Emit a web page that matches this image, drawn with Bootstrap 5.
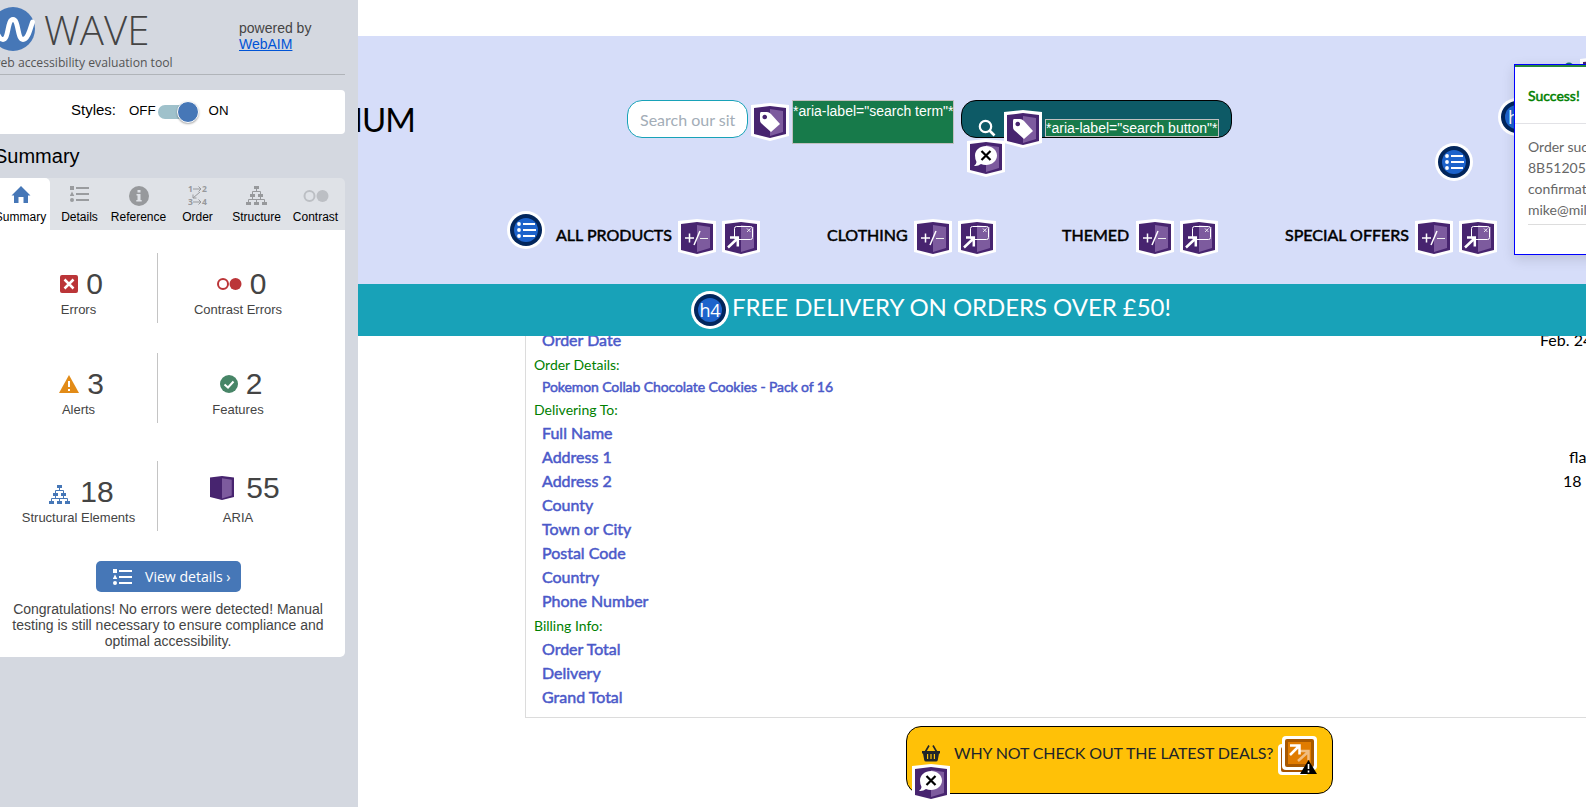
<!DOCTYPE html>
<html lang="en">
<head>
<meta charset="utf-8">
<title>WAVE report</title>
<link href="https://cdn.jsdelivr.net/npm/bootstrap@5.3.0/dist/css/bootstrap.min.css" rel="stylesheet">
<style>
body{font-family:Lato,sans-serif;font-size:16px;color:#000;width:1586px;height:807px;overflow:hidden;background:#fff}
svg{display:block;flex:none}
.wave-side{width:358px;height:807px;background:#d4d8e0;font-family:"Liberation Sans",sans-serif;color:#444;overflow:hidden;flex:none}
.wave-inner{width:354px;margin-left:-9px}
.wave-head{height:75px;border-bottom:1px solid #b0b4b9}
.logo-row{height:54px}
.logo-word{font:300 40.2px/44px "Open Sans",sans-serif;color:#444;height:44px;margin:8px 0 0 9px}
.tagline{font:12.2px/16px "Open Sans",sans-serif;white-space:nowrap;color:#555;padding-top:1px}
.powered{font-size:14px;line-height:16px;width:106px;padding-top:20px}
.powered a{color:#0054d6}
.styles-box{height:44px;margin-top:15px;border-radius:4px;background:#fff;color:#000}
.styles-box span{margin-top:-3px}
.sw-track{width:34px;height:14px;border-radius:7px;background:#9fc1cb;position:relative}
.sw-track i{position:absolute;left:19px;top:-4px;width:22px;height:22px;border-radius:50%;background:#4677b7;border:1px solid #fff;box-shadow:0 1px 2px #0005}
.side-title{font-size:20px;line-height:24px;color:#000;margin:10px 0 10px 3px}
.wave-tabs{height:52px;background:#dfe2e7;border-radius:5px 5px 0 0;overflow:hidden}
.wave-tab{width:59px;padding-top:6px;font-size:12px;line-height:16px;color:#000}
.wave-tab svg{margin-bottom:3px}
.wave-tab.on{background:#fff;border-radius:0 5px 0 0}
.panel{height:427px;background:#fff;border-radius:0 0 5px 5px;padding-top:23px}
.counts{width:320px;margin-left:9px}
.count-row{height:70px}
.count-row>div{width:160px;padding-top:14px}
.count-row>div:first-child{border-right:1px solid #c4c4c4;width:158px}
.num{font-size:30px;line-height:34px;height:34px;padding-left:6px}
.cap{font-size:13px;line-height:16px;margin-top:1px}
.vd{width:145px;height:31px;border-radius:5px;background:#4677b7;color:#fff;font:14.1px/20px "Open Sans",sans-serif;margin:30px 0 0 105px;padding-left:17px}
.congrats{font-size:14px;line-height:16px;margin-top:9px;padding:0 20px}
.site{width:1228px;overflow:hidden;position:relative}
.site-head{height:248px;background:#d6ddf9;margin-top:36px}
.brand{font-size:33px;line-height:40px;width:57px;height:40px;letter-spacing:-1px;margin-top:63px;flex:none;white-space:nowrap;padding-left:0}
.search{width:121px;height:38px;border:1px solid #18a2b8;border-radius:15px;background:#fff;color:#a3adb7;padding:7px 12px;white-space:nowrap;margin:64px 3px 0 212px;flex:none}
.aria-lab{background:#177a4a;border:1px solid #c0c0c0;color:#fff;font:14px/18px "Liberation Sans",sans-serif;white-space:nowrap;flex:none}
.sbtn{width:271px;height:38px;border:1px solid #000;border-radius:15px;background:#0d5a66;margin:64px 0 0 7px;flex:none;position:relative}
.over{position:absolute}
.fb{-webkit-text-stroke:.5px currentColor;white-space:nowrap}
.nav-line{padding:0 0 0 149px}
.nav-line .fb{line-height:24px;margin-top:12px;flex:none}
.promo{height:52px;background:#18a2b8;color:#fff;font-size:24px;line-height:29px;padding:7px 0 0 333px;letter-spacing:-.06px}
.order{margin-left:167px;border:1px solid #dcdcdc;border-width:0 0 1px 1px;height:382px;padding:0 0 8px 8px;overflow:hidden}
.order-in{margin-top:-8px}
.oh{font-size:14px;line-height:24px;color:#008000;position:relative;padding-top:1px;height:24px}
.orow{line-height:24px;padding-left:8px}
.orow .fb{color:#4b59c9}
.orow .sm{font-size:14px;line-height:21px;letter-spacing:-.09px}
.val{white-space:nowrap;overflow:hidden}
.deal{width:427px;height:68px;border:1px solid #000;border-radius:15px;background:#ffc107;color:#212529;margin:8px 0 0 548px;padding:9px 15px;position:relative}
.toastbox{left:1156px;top:64px;width:90px;height:191px;background:#fff;border:1px solid #00f;box-shadow:0 4px 12px #0002;overflow:hidden}
.toastbox .t-in{border-top:2px solid #28873c;padding-left:13px}
.t-h{height:57px;padding-top:18px;font-size:14px;line-height:21px;color:green;border-bottom:1px solid #e2e2e6;margin-left:-13px;padding-left:13px}
.t-b{font-size:14px;line-height:21px;color:#666;padding:12px 0 4px;border-bottom:1px solid #ddd;white-space:nowrap}
</style>
</head>
<body class="d-flex">
<svg width="0" height="0" class="position-absolute">
<symbol id="aria" viewBox="0 0 38 38"><path fill="#fff" d="M0 2 19 0l19 2v31l-19 5-19-5z"/><path fill="#47246f" d="M3 5l16-2 16 2v26l-16 4-16-4z"/><path fill="#7d5b9e" d="M19 6l13 2v21l-13 4z"/></symbol>
<symbol id="tag" viewBox="0 0 38 38"><use href="#aria"/><path fill="#fff" fill-rule="evenodd" d="M10 9h6q2 0 4 2l9 10-9 8-10-9q-1-1-1-3v-6q0-2 1-2zm3.700 2.700a2.300 2.300 0 1 0 .1 0z"/></symbol>
<symbol id="exp" viewBox="0 0 38 38"><use href="#aria"/><path stroke="#fff" stroke-width="1.500" fill="none" d="M7 19h9M11.500 14.500v9M16 26l6-14"/><path stroke="#eee" stroke-width="1" d="M22 19.500h8"/></symbol>
<symbol id="pop" viewBox="0 0 38 38"><use href="#aria"/><rect x="12.500" y="7.500" width="18" height="13" rx="2" fill="none" stroke="#fff"/><path stroke="#fff" stroke-width=".8" d="M25 9.500l3.500 3.500m0-3.500L25 13"/><path fill="none" stroke="#fff" stroke-width="2.500" d="M6 28.500L16 19M8 18.500h7.800v9"/></symbol>
<symbol id="say" viewBox="0 0 38 38"><use href="#aria"/><path fill="#fff" d="M19 7c6 0 11 4 11 9.500S25 26 19 26q-3 0-5-1-3 2.500-7 2 2.500-2 2.500-4Q8 20 8 16.500C8 11 13 7 19 7z"/><path stroke="#000" stroke-width="2.200" d="M14.500 12l9 9m0-9l-9 9"/></symbol>
<symbol id="disc" viewBox="0 0 38 38"><circle cx="19" cy="19" r="19" fill="#fff"/><circle cx="19" cy="19" r="16" fill="#02265c"/><circle cx="19" cy="19" r="12" fill="#1d63cb"/></symbol>
<symbol id="lst" viewBox="0 0 38 38"><use href="#disc"/><path stroke="#fff" stroke-width="2" d="M16 13h12M16 19h13M16 25h12"/><g fill="#fff"><circle cx="12" cy="13" r="1.900"/><circle cx="12" cy="19" r="1.900"/><circle cx="12" cy="25" r="1.900"/></g></symbol>
<symbol id="tree" viewBox="0 0 21 19"><path fill="currentColor" d="M8 0h5v3H8zM4 8h5v3H4zM12 8h5v3h-5zM0 16h5v3H0zM8 16h5v3H8zM16 16h5v3h-5z"/><path fill="none" stroke="currentColor" d="M10.500 3v2.500M6.500 8V5.500h8V8M6.500 11v2.500M14.500 11v2.500M2.500 16v-2.500h16V16M10.500 13.500V16"/></symbol>
<symbol id="dets" viewBox="0 0 19 16"><path fill="currentColor" d="M0 0h4v4H0zM2 5.500l2.300 4.500H-.3z"/><circle cx="2" cy="14" r="2" fill="currentColor"/><path stroke="currentColor" stroke-width="2" d="M6 2h13M6 8h13M6 14h13"/></symbol>
</svg>

<aside class="wave-side"><div class="wave-inner">
  <div class="wave-head d-flex justify-content-between">
    <div>
      <div class="d-flex logo-row">
        <svg width="44" height="51" viewBox="0 -7 44 51"><circle cx="22" cy="22" r="22" fill="#4677b7"/><path fill="none" stroke="#fff" stroke-width="4.800" stroke-linecap="round" d="M2 15C5 22 7 32.500 12 32.500c6 0 4-20 10-20s4 20 10 20c5 0 7-10 9.500-17.500"/></svg>
        <div class="logo-word">WAVE</div>
      </div>
      <div class="tagline">web accessibility evaluation tool</div>
    </div>
    <div class="powered">powered by<br><a href="#">WebAIM</a></div>
  </div>
  <div class="styles-box d-flex align-items-center">
    <span style="font-size:15px;margin-left:80px">Styles:</span><span style="font-size:13.300px;margin-right:2px;margin-left:13px">OFF</span>
    <div class="sw-track"><i></i></div><span style="font-size:13.300px;margin-left:17px">ON</span>
  </div>
  <div class="side-title">Summary</div>
  <div class="wave-tabs d-flex text-center">
    <div class="wave-tab on d-flex flex-column align-items-center"><svg width="20" height="22"><path fill="#4677b7" d="M10 2l9.500 9.500H17V19h-4.500v-6h-5v6H3v-7.500H.5z"/></svg>Summary</div>
    <div class="wave-tab d-flex flex-column align-items-center"><svg width="19" height="22" style="color:#9a9c9f"><use href="#dets" y="2" width="19" height="16"/></svg>Details</div>
    <div class="wave-tab d-flex flex-column align-items-center"><svg width="20" height="22"><circle cx="10" cy="12" r="10" fill="#97999c"/><path fill="#dfe2e7" d="M8.500 6h3v2.500h-3zM7.500 10h4v6h1.200v1.500H7.300V16h1.200v-4.500h-1z"/></svg>Reference</div>
    <div class="wave-tab d-flex flex-column align-items-center"><svg width="20" height="22" font-family="Open Sans,sans-serif" font-weight="700" font-size="8.500" fill="#97999c"><text x="0" y="8">1</text><text x="14" y="8">2</text><text x="0" y="21">3</text><text x="14" y="21">4</text><path fill="none" stroke="#97999c" d="M5 5h8m-2.500-2.500L13 5l-2.500 2.500M5 18h8m-2.500-2.500L13 18l-2.500 2.500M12 8l-7 6m0-3.500V14h3.500"/></svg>Order</div>
    <div class="wave-tab d-flex flex-column align-items-center"><svg width="21" height="22" style="color:#97999c"><use href="#tree" y="2" width="21" height="19"/></svg>Structure</div>
    <div class="wave-tab d-flex flex-column align-items-center"><svg width="26" height="22"><circle cx="6.500" cy="12" r="5" fill="none" stroke="#bcbfc4" stroke-width="2"/><circle cx="19.500" cy="12" r="6" fill="#bcbfc4"/></svg>Contrast</div>
  </div>
  <div class="panel">
    <div class="counts text-center">
      <div class="count-row d-flex">
        <div><div class="num d-flex justify-content-center align-items-center"><svg width="18" height="18" style="margin-right:8px"><rect width="18" height="18" rx="2" fill="#bb3538"/><path stroke="#fff" stroke-width="2.500" d="M4.500 4.500l9 9m0-9l-9 9"/></svg>0</div><div class="cap">Errors</div></div>
        <div><div class="num d-flex justify-content-center align-items-center"><svg width="26" height="14" style="margin-right:8px"><circle cx="7" cy="7" r="5" fill="none" stroke="#bb3538" stroke-width="2"/><circle cx="19.500" cy="7" r="6" fill="#bb3538"/></svg>0</div><div class="cap">Contrast Errors</div></div>
      </div>
      <div class="count-row d-flex" style="margin-top:30px">
        <div><div class="num d-flex justify-content-center align-items-center"><svg width="20" height="18" style="margin-right:8px"><path fill="#e28b17" d="M10 0l10 18H0z"/><path fill="#fff" d="M9 6h2v6H9zM9 14h2v2H9z"/></svg>3</div><div class="cap">Alerts</div></div>
        <div><div class="num d-flex justify-content-center align-items-center"><svg width="18" height="18" style="margin-right:8px"><circle cx="9" cy="9" r="9" fill="#478567"/><path fill="none" stroke="#fff" stroke-width="2" d="M4.500 9.500L8 12.500l5.500-6"/></svg>2</div><div class="cap">Features</div></div>
      </div>
      <div class="count-row d-flex" style="margin-top:38px">
        <div><div class="num d-flex justify-content-center align-items-center"><svg width="21" height="19" style="margin:4px 10px 0 0;color:#4677b7"><use href="#tree"/></svg>18</div><div class="cap">Structural Elements</div></div>
        <div><div class="num d-flex justify-content-center align-items-center" style="margin-top:-4px;margin-bottom:5px;padding-left:14px"><svg width="24" height="24" viewBox="3 3 32 32" style="margin-right:12px"><use href="#aria" width="38" height="38"/></svg>55</div><div class="cap">ARIA</div></div>
      </div>
    </div>
    <div class="vd d-flex align-items-center"><svg width="19" height="16" style="margin-right:13px"><use href="#dets"/></svg>View details ›</div>
    <div class="congrats text-center">Congratulations! No errors were detected! Manual testing is still necessary to ensure compliance and optimal accessibility.</div>
  </div>
</div></aside>

<main class="site">
  <header class="site-head">
    <div class="d-flex" style="height:175px">
      <div class="brand d-flex justify-content-end">IUM</div>
      <div class="search">Search our sit</div>
      <svg width="38" height="38" style="margin-top:67px"><use href="#tag"/></svg>
      <div class="aria-lab" style="width:162px;height:44px;line-height:20px;margin:64px 0 0 3px">*aria-label="search term"*</div>
      <div class="sbtn d-flex"><svg width="18" height="18" style="margin:18px 0 0 16px"><circle cx="7.500" cy="7.500" r="5.700" fill="none" stroke="#fff" stroke-width="2.200"/><path stroke="#fff" stroke-width="2.600" d="M11.500 11.500l5 5"/></svg>
        <svg width="38" height="38" style="margin:9px 3px 0 8px"><use href="#tag"/></svg>
        <div class="aria-lab" style="width:174px;height:18px;line-height:16px;margin-top:18px">*aria-label="search button"*</div>
        <svg width="38" height="38" class="over" style="left:5px;top:38px"><use href="#say"/></svg>
      </div>
      <svg width="38" height="38" style="margin:107px 0 0 203px"><use href="#lst"/></svg>
    </div>
    <nav class="nav-line d-flex">
      <svg width="38" height="38"><use href="#lst"/></svg>
      <span class="fb" style="width:115px;margin-left:11px;margin-right:7px">ALL PRODUCTS</span><svg width="38" height="38" style="margin:8px 6px 0 0"><use href="#exp"/></svg><svg width="38" height="38" style="margin-top:8px"><use href="#pop"/></svg>
      <span class="fb" style="width:80px;margin-left:67px;margin-right:7px">CLOTHING</span><svg width="38" height="38" style="margin:8px 6px 0 0"><use href="#exp"/></svg><svg width="38" height="38" style="margin-top:8px"><use href="#pop"/></svg>
      <span class="fb" style="width:67px;margin-left:66px;margin-right:7px">THEMED</span><svg width="38" height="38" style="margin:8px 6px 0 0"><use href="#exp"/></svg><svg width="38" height="38" style="margin-top:8px"><use href="#pop"/></svg>
      <span class="fb" style="width:124px;margin-left:67px;margin-right:6px">SPECIAL OFFERS</span><svg width="38" height="38" style="margin:8px 6px 0 0"><use href="#exp"/></svg><svg width="38" height="38" style="margin-top:8px"><use href="#pop"/></svg>
    </nav>
  </header>
  <div class="promo d-flex"><svg width="38" height="38" style="margin-right:3px"><use href="#disc"/><text x="19" y="26" fill="#fff" font-family="Open Sans,sans-serif" font-size="18" text-anchor="middle">h4</text></svg><span style="margin-top:1px">FREE DELIVERY ON ORDERS OVER £50!</span></div>
  <section class="order"><div class="order-in">
    <div class="orow d-flex justify-content-between"><span class="fb">Order Date</span><span class="val" style="width:46px">Feb. 24</span></div>
    <div class="oh">Order Details:</div>
    <div class="orow sm-row d-flex" style="height:21px"><span class="fb sm">Pokemon Collab Chocolate Cookies - Pack of 16</span></div>
    <div class="oh">Delivering To:</div>
    <div class="orow"><span class="fb">Full Name</span></div>
    <div class="orow d-flex justify-content-between"><span class="fb">Address 1</span><span class="val" style="width:17px">fla</span></div>
    <div class="orow d-flex justify-content-between"><span class="fb">Address 2</span><span class="val" style="width:23px">18 L</span></div>
    <div class="orow"><span class="fb">County</span></div>
    <div class="orow"><span class="fb">Town or City</span></div>
    <div class="orow"><span class="fb">Postal Code</span></div>
    <div class="orow"><span class="fb">Country</span></div>
    <div class="orow"><span class="fb">Phone Number</span></div>
    <div class="oh">Billing Info:</div>
    <div class="orow"><span class="fb">Order Total</span></div>
    <div class="orow"><span class="fb">Delivery</span></div>
    <div class="orow"><span class="fb">Grand Total</span></div>
  </div></section>
  <div class="deal d-flex"><svg width="18" height="17" style="margin:9px 14px 0 0"><path fill="#212529" fill-rule="evenodd" d="M0 6h18v2.500h-1L15.800 15q-.3 1.500-1.800 1.500H4Q2.500 16.500 2.200 15L1 8.500H0zM5 9v5h1.200V9zm3.400 0v5h1.200V9zm3.400 0v5H13V9z"/><path stroke="#212529" stroke-width="1.600" d="M3.500 6.500L7 .5m7.500 6L11 .5"/></svg><span class="text-nowrap" style="margin-top:5px;letter-spacing:-.13px">WHY NOT CHECK OUT THE LATEST DEALS?</span>
    <svg width="39" height="39" class="over" style="left:371px;top:9px"><rect y="8" width="31" height="31" rx="4" fill="#fff"/><rect x="3" y="11" width="24" height="25" rx="2" fill="#a65300"/><rect x="4" width="35" height="34" rx="4" fill="#fff"/><rect x="7" y="3" width="29" height="28" rx="2" fill="#a85800"/><rect x="10" y="6" width="23" height="22" fill="#e07b00"/><path fill="none" stroke="#f0bd80" stroke-width="2.500" d="M20 25l10-9m-9-1h9.500v9"/><path fill="none" stroke="#fff" stroke-width="2.500" d="M12 19l9-9m-9-.500h9.500v9"/><path d="M30.500 24L39 38H22z"/><path stroke="#fff" stroke-width="1.600" d="M30.500 28v5m0 1.500v2"/></svg>
    <svg width="38" height="38" class="over" style="left:5px;top:37px"><use href="#say"/></svg>
  </div>
  <svg width="38" height="38" class="over" style="left:1140px;top:98px"><use href="#disc"/><text x="10" y="26" fill="#fff" font-family="Open Sans,sans-serif" font-size="18">h</text></svg>
  <svg width="38" height="38" class="over" style="left:1222px;top:57px"><use href="#aria"/></svg>
  <svg width="10" height="10" class="over" style="left:1206px;top:62px"><circle cx="5" cy="5" r="4.500" fill="#12706f"/></svg>
  <div class="toastbox over"><div class="t-in"><div class="t-h"><span class="fb">Success!</span></div><div class="t-b">Order suc<br>8B51205<br>confirmat<br>mike@mil</div></div></div>
</main>
<script src="https://cdn.jsdelivr.net/npm/bootstrap@5.3.0/dist/js/bootstrap.bundle.min.js"></script>
</body>
</html>
